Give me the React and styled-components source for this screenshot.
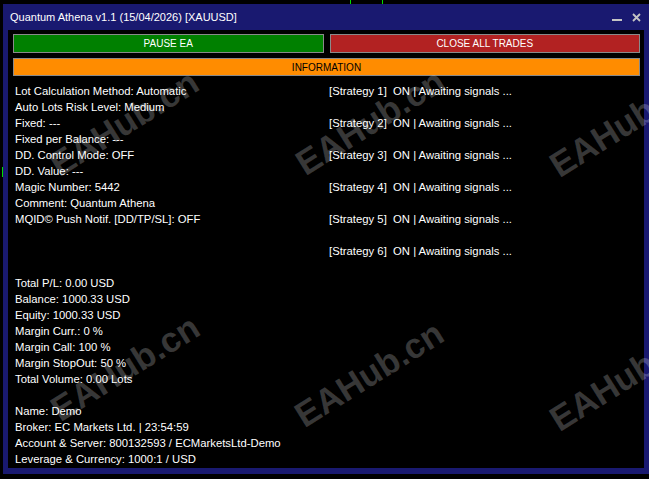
import React from 'react';
import styled, { createGlobalStyle } from 'styled-components';

const GlobalStyle = createGlobalStyle`
	html, body {
		margin: 0;
		padding: 0;
		background: #000;
		overflow: hidden;
	}
`;

const Screen = styled.div`
	position: relative;
	width: 649px;
	height: 479px;
	background: #000;
	overflow: hidden;
	padding: 4px 0 0 3px;
	box-sizing: border-box;
	font-family: 'Liberation Sans', Arial, sans-serif;
`;

const Tick = styled.div`
	position: absolute;
	background: #00e000;
`;

const Window = styled.div`
	width: 646px;
	height: 470px;
	background: #191970;
	display: flex;
	flex-direction: column;
	padding: 0 5px 6px 5px;
	box-sizing: border-box;
`;

const TitleBar = styled.div`
	height: 26px;
	display: flex;
	align-items: center;
	justify-content: space-between;
	padding-left: 2px;
	color: #fff;
	font-size: 11px;
`;

const Controls = styled.div`
	display: flex;
	align-items: center;
	gap: 10px;
	padding-right: 3px;
	color: #c4c4c4;
`;

const Content = styled.div`
	flex: 1;
	background: #000;
	overflow: hidden;
	padding: 4px 4px 0 5px;
	color: #fff;
	font-size: 11.3px;
`;

const ButtonRow = styled.div`
	display: grid;
	grid-template-columns: 1fr 1fr;
	gap: 6px;
`;

const Button = styled.div`
	height: 19px;
	box-sizing: border-box;
	border: 1px solid #8a8a8a;
	background: ${(p) => p.$bg};
	color: ${(p) => p.$fg || '#fff'};
	display: flex;
	align-items: center;
	justify-content: center;
	font-size: 10px;
`;

const InfoBar = styled(Button)`
	margin-top: 5px;
	height: 18px;
`;

const Columns = styled.div`
	display: grid;
	grid-template-columns: 1fr 1fr;
	gap: 3px;
	margin-top: 7px;
	padding-left: 2px;
`;

const Column = styled.div`
	display: flex;
	flex-direction: column;
`;

const Line = styled.div`
	height: ${(p) => (p.$tall ? 32 : 16)}px;
	line-height: 16px;
	white-space: pre;
`;

const Watermark = styled.div`
	position: absolute;
	left: ${(p) => p.$x}px;
	top: ${(p) => p.$y}px;
	transform: translate(-50%, -50%) rotate(-32deg);
	font-family: 'Liberation Sans', Arial, sans-serif;
	font-weight: bold;
	font-size: 35px;
	color: rgba(255, 255, 255, 0.22);
	white-space: nowrap;
	pointer-events: none;
`;

const settings = [
	'Lot Calculation Method: Automatic',
	'Auto Lots Risk Level: Medium',
	'Fixed: ---',
	'Fixed per Balance: ---',
	'DD. Control Mode: OFF',
	'DD. Value: ---',
	'Magic Number: 5442',
	'Comment: Quantum Athena',
	'MQID\u00a9 Push Notif. [DD/TP/SL]: OFF',
	'',
	'',
	'',
	'Total P/L: 0.00 USD',
	'Balance: 1000.33 USD',
	'Equity: 1000.33 USD',
	'Margin Curr.: 0 %',
	'Margin Call: 100 %',
	'Margin StopOut: 50 %',
	'Total Volume: 0.00 Lots',
	'',
	'Name: Demo',
	'Broker: EC Markets Ltd. | 23:54:59',
	'Account & Server: 800132593 / ECMarketsLtd-Demo',
	'Leverage & Currency: 1000:1 / USD',
];

const strategies = [1, 2, 3, 4, 5, 6];

// watermark centres, in screen pixels
const marks = [
	[124, 123],
	[370, 122],
	[624, 124],
	[125, 368],
	[369, 374],
	[624, 378],
];

function App() {
	return (
		<Screen>
			<GlobalStyle />
			<Tick style={{ left: 350, top: 0, width: 1, height: 4 }} />
			<Tick style={{ left: 382, top: 0, width: 1, height: 4 }} />
			<Tick style={{ left: 2, top: 167, width: 1, height: 10 }} />
			<Window>
				<TitleBar>
					<span>Quantum Athena v1.1 (15/04/2026) [XAUUSD]</span>
					<Controls>
						<svg width="10" height="10" viewBox="0 0 10 10">
							<rect x="0" y="7" width="10" height="2" fill="currentColor" />
						</svg>
						<svg width="9" height="9" viewBox="0 0 9 9">
							<path d="M1 1L8 8M8 1L1 8" stroke="currentColor" strokeWidth="1.8" />
						</svg>
					</Controls>
				</TitleBar>
				<Content>
					<ButtonRow>
						<Button $bg="#008000">PAUSE EA</Button>
						<Button $bg="#b22222">CLOSE ALL TRADES</Button>
					</ButtonRow>
					<InfoBar $bg="#ff8c00" $fg="#000">INFORMATION</InfoBar>
					<Columns>
						<Column>
							{settings.map((t, i) => (
								<Line key={i}>{t}</Line>
							))}
						</Column>
						<Column>
							{strategies.map((n) => (
								<Line key={n} $tall>
									{`[Strategy ${n}]  ON | Awaiting signals ...`}
								</Line>
							))}
						</Column>
					</Columns>
				</Content>
			</Window>
			{marks.map(([x, y], i) => (
				<Watermark key={i} $x={x} $y={y}>
					EAHub.cn
				</Watermark>
			))}
		</Screen>
	);
}

export default App;
